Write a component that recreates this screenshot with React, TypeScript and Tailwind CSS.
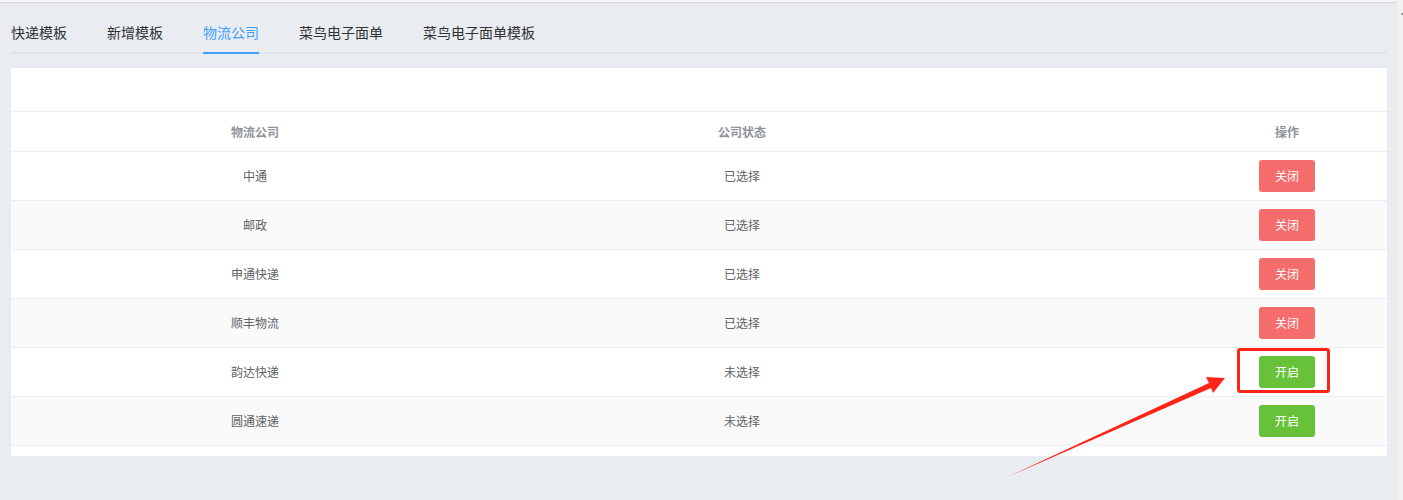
import React, { useState } from 'react';
import clsx from 'clsx';

interface Carrier {
  name: string;
  selected: boolean;
}

const carriers: Carrier[] = [
  { name: '中通', selected: true },
  { name: '邮政', selected: true },
  { name: '申通快递', selected: true },
  { name: '顺丰物流', selected: true },
  { name: '韵达快递', selected: false },
  { name: '圆通速递', selected: false },
];

const tabs = ['快递模板', '新增模板', '物流公司', '菜鸟电子面单', '菜鸟电子面单模板'];

const font = { fontFamily: '"Noto Sans CJK SC", "Noto Sans", sans-serif' };

const App: React.FC = () => {
  const [active, setActive] = useState(2);

  return (
    <div className="relative flex h-[500px] w-full overflow-hidden bg-[#e9edf1]" style={font}>
      <div className="flex flex-1 flex-col">
        <div className="h-[3px] bg-[#f4f6f8] border-b border-[#d2d5d8]" />

        <div className="px-[11px] pr-[10px]">
          {/* tab bar */}
          <div className="mt-[9px] flex gap-10 border-b-2 border-[#e0e4e9]">
            {tabs.map((t, i) => (
              <button
                key={t}
                onClick={() => setActive(i)}
                className={clsx(
                  '-mb-[2px] h-[42px] border-b-2 text-sm leading-[40px]',
                  i === active ? 'border-[#409eff] text-[#409eff]' : 'border-transparent text-[#303133]'
                )}
              >
                {t}
              </button>
            ))}
          </div>

          {/* carrier table */}
          <div className="mt-[14px] h-[388px] bg-white">
            <div className="h-[44px] border-b border-[#ebeef5]" />
            <div className="grid h-[40px] grid-cols-[488px_486px_1fr] items-center border-b border-[#ebeef5] text-xs font-bold text-[#909399]">
              <div className="text-center">物流公司</div>
              <div className="text-center">公司状态</div>
              <div className="pl-[202px] text-center">操作</div>
            </div>
            {carriers.map((c, i) => (
              <div
                key={c.name}
                className={clsx(
                  'grid h-[49px] grid-cols-[488px_486px_1fr] items-center border-b border-[#ebeef5] text-xs text-[#606266]',
                  i % 2 === 1 ? 'bg-[#fafafa]' : 'bg-white'
                )}
              >
                <div className="text-center">{c.name}</div>
                <div className="text-center">{c.selected ? '已选择' : '未选择'}</div>
                <div className="flex justify-center pl-[202px]">
                  <button
                    className={clsx(
                      'h-[32px] w-[56px] rounded-[3px] text-xs text-white',
                      c.selected ? 'bg-[#f56c6c]' : 'bg-[#67c23a]'
                    )}
                  >
                    {c.selected ? '关闭' : '开启'}
                  </button>
                </div>
              </div>
            ))}
          </div>
        </div>
      </div>

      {/* scrollbar strip */}
      <div className="relative w-[6px] bg-[#f1f1f1]">
        <div className="absolute right-0 top-[13px] h-[2px] w-[2px] bg-[#9a9a9a]" />
      </div>

      {/* red highlight box + arrow */}
      <div className="pointer-events-none absolute left-[1237px] top-[348px] h-[45px] w-[93px] rounded-[3px] border-[3px] border-[#ff2418]" />
      <svg className="pointer-events-none absolute left-0 top-0" width="1403" height="500">
        <polygon
          points="1005,478 1209,383 1206,377 1225,378 1213,393 1211,388"
          fill="#ff2418"
        />
      </svg>
    </div>
  );
};

export default App;
